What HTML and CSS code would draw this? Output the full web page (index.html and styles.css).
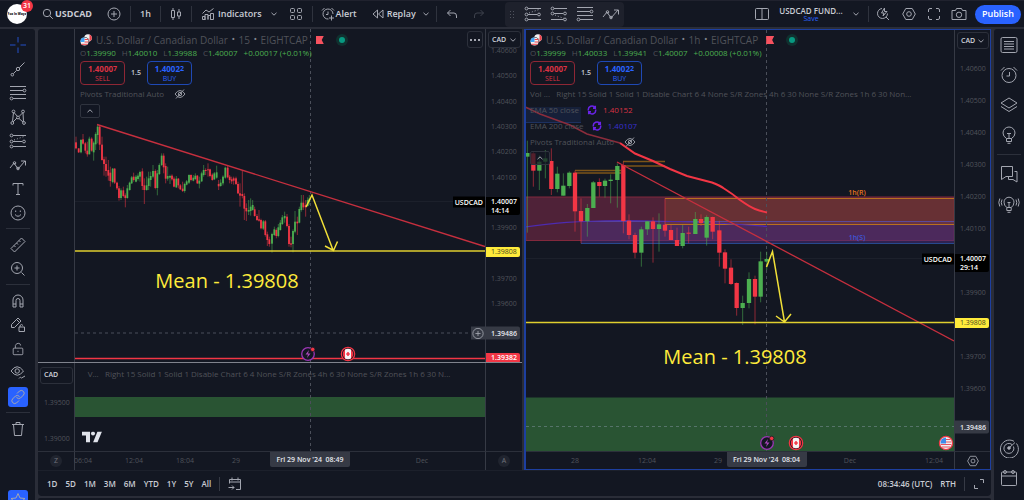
FILE: index.html
```html
<!DOCTYPE html>
<html lang="en">
<head>
<meta charset="utf-8">
<title>USDCAD chart</title>
<link rel="stylesheet" href="styles.css">
</head>
<body>
<svg class="defs" aria-hidden="true">
  <symbol id="i-chev" viewBox="0 0 8 8"><path d="M1.5 2.8 4 5.2 6.5 2.8"/></symbol>
  <symbol id="i-up" viewBox="0 0 8 8"><path d="M1.5 5.2 4 2.8 6.5 5.2"/></symbol>
  <symbol id="i-dots" viewBox="0 0 12 4"><path d="M1 1h2v2H1zM5 1h2v2H5zM9 1h2v2H9z" fill="#a3a6b0" stroke="none"/></symbol>
  <symbol id="i-search" viewBox="0 0 12 12"><circle cx="5" cy="5" r="3.7"/><path d="m7.8 7.8 3 3"/></symbol>
  <symbol id="i-plus" viewBox="0 0 14 14"><circle cx="7" cy="7" r="6"/><path d="M7 4v6M4 7h6"/></symbol>
  <symbol id="i-candles" viewBox="0 0 12 14"><path d="M1.5 3.5h3v7h-3zM3 1v2.500M3 10.500V13M7.500 5h3v4h-3zM9 2v3M9 9v3"/></symbol>
  <symbol id="i-ind" viewBox="0 0 14 14"><path d="M1.500 12.500V9.500h2.500v3M4 12.500v-5h3v5M7 12.500V8.500h2.500v4M9.500 12.500v-6H12.500v6zM1.500 6.500 5 3 8 5 12.500 1.500M1.500 12.500h3"/></symbol>
  <symbol id="i-grid" viewBox="0 0 14 14"><rect x="1.500" y="1.500" width="4" height="4" rx="1"/><rect x="8.500" y="1.500" width="4" height="4" rx="1"/><rect x="1.500" y="8.500" width="4" height="4" rx="1"/><rect x="8.500" y="8.500" width="4" height="4" rx="1"/></symbol>
  <symbol id="i-alert" viewBox="0 0 14 14"><path d="M7.500 12A5 5 0 1 1 12 7M7 4.500v3H5M1 3.500 3.500 1M10.500 1 13 3.500M10.500 8.500v5M8 11h5"/></symbol>
  <symbol id="i-replay" viewBox="0 0 12 12"><path d="M5.500 2 1 6l4.500 4zM11 2 6.500 6 11 10z"/></symbol>
  <symbol id="i-undo" viewBox="0 0 12 12"><path d="M4.500 2 1.500 5l3 3M1.500 5H8q2.500 0 2.500 3v2"/></symbol>
  <symbol id="i-redo" viewBox="0 0 12 12"><path d="m7.500 2 3 3-3 3M10.500 5H4Q1.500 5 1.500 8v2"/></symbol>
  <symbol id="i-par" viewBox="0 0 18 16"><path d="M4 2.500h13M4 8.500h9M4 13.500h13"/><path d="m5 7 10-3.500" stroke-dasharray="1 2"/><circle cx="2.500" cy="2.500" r="1.400"/><circle cx="2.500" cy="8.500" r="1.400"/><circle cx="15" cy="8.500" r="1.400"/><circle cx="2.500" cy="13.500" r="1.400"/></symbol>
  <symbol id="i-par2" viewBox="0 0 18 16"><path d="M4 2.500h13M4 7.500h9M1 13.500h12"/><path d="m5 9 9 3.500" stroke-dasharray="1 2"/><circle cx="2.500" cy="2.500" r="1.400"/><circle cx="2.500" cy="7.500" r="1.400"/><circle cx="15" cy="7.500" r="1.400"/><circle cx="15" cy="13.500" r="1.400"/></symbol>
  <symbol id="i-fib" viewBox="0 0 18 16"><path d="M1 1.500h16M1 5.500h13M1 9.500h16M4 13.500h13"/><circle cx="15.500" cy="5.500" r="1.400"/><circle cx="2.500" cy="13.500" r="1.400"/></symbol>
  <symbol id="i-zig" viewBox="0 0 18 16"><path d="m1 11 4-5 4 6 7-8M12 4h4.500v4.500"/><circle cx="5.500" cy="6" r="1.300"/><circle cx="9" cy="11.500" r="1.300"/></symbol>
  <symbol id="i-layout" viewBox="0 0 14 14"><rect x=".5" y="1.500" width="13" height="11" rx="1"/><path d="M7 1.500v11"/></symbol>
  <symbol id="i-quick" viewBox="0 0 14 14"><path d="M6 1.500a5 5 0 1 0 5.500 5M10 10l3 3M8.500 1 5.500 6H8L7 9l4-4.500H8.500z"/></symbol>
  <symbol id="i-gear" viewBox="0 0 14 14"><path d="M3.800 1.500h6.400L13.300 7l-3.100 5.500H3.800L.7 7z"/><circle cx="7" cy="7" r="2.300"/></symbol>
  <symbol id="i-full" viewBox="0 0 14 14"><path d="M1.500 5V3q0-1.500 1.500-1.500h2M9 1.500h2q1.500 0 1.500 1.500v2M12.500 9v2q0 1.500-1.500 1.500H9M5 12.500H3q-1.500 0-1.500-1.500V9"/></symbol>
  <symbol id="i-cam" viewBox="0 0 16 14"><path d="M1 3.500h3.500L5.500 1.500h5l1 2H15v9H1z"/><circle cx="8" cy="7.800" r="2.700"/></symbol>
  <symbol id="i-cross" viewBox="0 0 16 16"><path d="M8 0v5.500M8 10.500V16M0 8h5.500M10.500 8H16"/></symbol>
  <symbol id="i-line" viewBox="0 0 16 16"><path d="m3.300 12.700 3.300-3.300M9.400 6.600 14.500 1.500"/><circle cx="8" cy="8" r="1.700"/><circle cx="2.300" cy="13.700" r="1.300"/></symbol>
  <symbol id="i-pat" viewBox="0 0 16 16"><path d="m2.500 12.500 1-9M4 3.500l3.500 4M3 13l4-4M9 7.500 12.500 4M13 4l.5 8.500M9 9.500l4 3.500"/><circle cx="3.500" cy="2.500" r="1.400"/><circle cx="13" cy="2.500" r="1.400"/><circle cx="8" cy="8.500" r="1.400"/><circle cx="2.300" cy="14" r="1.400"/><circle cx="14" cy="14" r="1.400"/></symbol>
  <symbol id="i-text" viewBox="0 0 16 16"><path d="M3 4.500V2.500h10v2M8 2.500v11M6 13.500h4"/></symbol>
  <symbol id="i-smile" viewBox="0 0 16 16"><circle cx="8" cy="8" r="7"/><path d="M5 9.500q3 3.500 6 0M5.700 5.500v1.500M10.300 5.500v1.500"/></symbol>
  <symbol id="i-ruler" viewBox="0 0 16 16"><path d="M1 11.500 11.500 1 15 4.500 4.500 15zM4 8.500l1.500 1.500M6.500 6 8 7.500M9 3.500 10.500 5"/></symbol>
  <symbol id="i-zoom" viewBox="0 0 16 16"><circle cx="7" cy="7" r="5.500"/><path d="M7 4.500v5M4.500 7h5M11.500 11.500l3 3"/></symbol>
  <symbol id="i-mag" viewBox="0 0 16 16"><path d="M3 14V7a5 5 0 0 1 10 0v7h-3V7.500a2 2 0 0 0-4 0V14zM3 11h3M10 11h3"/></symbol>
  <symbol id="i-penlock" viewBox="0 0 16 16"><path d="M1.500 10.500v-3L8 1l3 3-6.500 6.500zM6.500 2.500l3 3M9 10h5.500v4.500H9zM10 10V8.500q1.700-2 3 0"/></symbol>
  <symbol id="i-lock" viewBox="0 0 16 16"><rect x="2.500" y="7" width="11" height="7.500" rx="1"/><path d="M5 7V4q1-3 4-2.500 2 .5 2 2.500M8 10v1.500"/></symbol>
  <symbol id="i-eye" viewBox="0 0 16 16"><path d="M1 6q6-8.500 12.500 0-6 8.500-12.500 0z"/><circle cx="7.200" cy="6" r="2.200"/><path d="M9 13.500q1.500-2.500 2.500-.5l3.500-2"/></symbol>
  <symbol id="i-link" viewBox="0 0 16 16"><path d="m7 4.500 2.500-2.500q2.500-1.500 4 .5 1.500 1.500 0 3.500l-3 3q-2 1.500-4-.5M9 11.500 6.500 14q-2.500 1.500-4-.5-1.500-1.500 0-3.500l3-3q2-1.500 4 .5"/></symbol>
  <symbol id="i-trash" viewBox="0 0 16 16"><path d="M2 3.500h12M6 3.500V1.500h4v2M3.500 3.500l1 11h7l1-11"/></symbol>
  <symbol id="i-star" viewBox="0 0 16 16"><path d="m8 1.500 2 4.500 5 .5-3.700 3.300 1 4.700L8 12l-4.300 2.500 1-4.700L1 6.500 6 6z"/></symbol>
  <symbol id="i-list" viewBox="0 0 18 18"><rect x="1" y="1.500" width="16" height="15" rx="1.500"/><path d="M4 5.500h10M4 8h10M4 10.500h10M4 13h10"/></symbol>
  <symbol id="i-clock" viewBox="0 0 18 18"><circle cx="9" cy="9.500" r="7"/><path d="M9.500 6v4h-3M1 4.500 4.500 1M13.500 1 17 4.500"/></symbol>
  <symbol id="i-layers" viewBox="0 0 18 18"><path d="m9 2 8 5-8 5-8-5zM1 10.500l8 5 8-5"/></symbol>
  <symbol id="i-bulb" viewBox="0 0 18 18"><path d="M6.500 12.500Q3 10.500 3 7a6 6 0 0 1 12 0q0 3.500-3.500 5.500zM6.500 12.500v3h5v-3M7.500 17.300h3M7 7.500h4M9 7.500v5"/></symbol>
  <symbol id="i-chat" viewBox="0 0 18 18"><path d="M1.500 1.500h11v10H6L1.500 14.500zM14.500 6.500h2.500v10.500L13 14.500H8.500v-3"/></symbol>
  <symbol id="i-wave" viewBox="0 0 22 18"><path d="M8.800 12.500Q6 10.500 6 7.200a5 5 0 0 1 10 0q0 3.300-2.800 5.300zM8.800 12.500v3h4.400v-3M9.500 17.300h3M9.500 7.500h3M11 7.500v5M4 4.500q-1.500 3 0 6M1.800 3.500q-2 4 0 8M18 4.500q1.500 3 0 6M20.200 3.500q2 4 0 8"/></symbol>
  <symbol id="i-target" viewBox="0 0 20 20"><path d="M15 3.300A9 9 0 1 0 17.500 5.500M13 6.500a5 5 0 1 0 1.500 2M10 10l6-5.500"/><circle cx="10" cy="10" r="1.300" fill="#b2b5be"/></symbol>
  <symbol id="i-cal" viewBox="0 0 18 18"><rect x="1.500" y="3" width="15" height="13.500" rx="1"/><path d="M1.500 7h15"/><circle cx="5" cy="3" r="1.500"/><circle cx="13" cy="3" r="1.500"/></symbol>
  <symbol id="i-goto" viewBox="0 0 14 14"><path d="M1.500 6.500v-4h11v10H8M1.500 5h11M4 .5v3M10 .5v3M.5 10.500H6M4 8.500l2 2-2 2"/></symbol>
  <symbol id="i-exp" viewBox="0 0 12 12"><path d="M7 1.500h3.500V5M1.500 7v3.500H5"/></symbol>
  <symbol id="i-hide" viewBox="0 0 12 10"><path d="M1 5q5-7 10 0-5 7-10 0zM2 9.500 10 .5"/><circle cx="6" cy="5" r="1.700"/></symbol>
  <symbol id="i-loop" viewBox="0 0 10 10"><path d="M1.500 5.500A3.500 3.500 0 0 1 8 3M8.500 4.500A3.500 3.500 0 0 1 2 7M8.300.8V3.200H6M1.700 9.200V6.800H4"/></symbol>
  <symbol id="i-pair" viewBox="0 0 12 12"><circle cx="8" cy="4" r="3.800" fill="#f0f0f0"/><path d="M9.500.5a3.800 3.800 0 0 1 0 7z" fill="#ef3f49"/><circle cx="4.500" cy="7.500" r="4.500" fill="#131722"/><circle cx="4.500" cy="7.500" r="4" fill="#f0f0f0"/><path d="M4.500 5.500h3.500M4.500 8h4M1.500 10.300h6" stroke="#ef3f49"/><path d="M.5 7.500a4 4 0 0 1 4-4v4.500H.6z" fill="#42a5f5"/></symbol>
  <symbol id="i-bolt" viewBox="0 0 16 16"><circle cx="8" cy="8" r="6.300" fill="#131722" stroke="#9c36b5" stroke-width="1.300"/><path d="M9 4 5.500 8.500H8L7 12l3.500-4.500H8z" fill="#ab47bc"/><circle cx="12.700" cy="3.400" r="2.200" fill="#f23645" stroke="#131722" stroke-width=".7"/></symbol>
  <symbol id="i-ca" viewBox="0 0 16 16"><circle cx="8" cy="8" r="6.700" fill="#131722" stroke="#f23645" stroke-width="1.200"/><circle cx="8" cy="8" r="5.300" fill="#f23645"/><path d="M5 3.600q3-1.600 6 0v8.800q-3 1.600-6 0z" fill="#f5f5f5"/><path d="M8 6v4M6.200 8h3.600" stroke="#f23645" stroke-width="1.500"/></symbol>
  <symbol id="i-us" viewBox="0 0 16 16"><circle cx="8" cy="8" r="6.600" fill="#f0f0f0" stroke="#f23645" stroke-width="1.200"/><path d="M8 4.500h4.500M8 7h5.400M2.700 9.500h10.600M4 12h8" stroke="#e65361" stroke-width="1.200"/><path d="M2.500 8.500A5.500 5.500 0 0 1 8 2.500v6z" fill="#3d8bea"/></symbol>
</svg>

<div class="app">
  <header class="top">
    <button class="avatar" aria-label="Account"><span class="face">Fox In Wayz</span><span class="badge">31</span></button>
    <button class="symbol"><svg class="ic s12"><use href="#i-search"/></svg>USDCAD</button>
    <button class="tool w32" aria-label="Compare"><svg class="ic s14"><use href="#i-plus"/></svg></button>
    <button class="tool w30 cut">1h</button>
    <button class="tool w31 cut" aria-label="Chart type"><svg class="ic s14"><use href="#i-candles"/></svg></button>
    <button class="tool lead cut"><svg class="ic s14"><use href="#i-ind"/></svg>Indicators</button>
    <button class="tool w24" aria-label="Indicator menu"><svg class="ic s8"><use href="#i-chev"/></svg></button>
    <button class="tool w20" aria-label="Templates"><svg class="ic s14"><use href="#i-grid"/></svg></button>
    <button class="tool lead alert cut"><svg class="ic s14"><use href="#i-alert"/></svg>Alert</button>
    <button class="tool lead replay"><svg class="ic s12"><use href="#i-replay"/></svg>Replay</button>
    <button class="tool w20" aria-label="Replay menu"><svg class="ic s8"><use href="#i-chev"/></svg></button>
    <button class="tool w31 cut" aria-label="Undo"><svg class="ic s12"><use href="#i-undo"/></svg></button>
    <button class="tool w24 off" aria-label="Redo"><svg class="ic s12"><use href="#i-redo"/></svg></button>
    <div class="floating">
      <span class="grip"></span>
      <button class="tool" aria-label="Parallel"><svg class="ic s18"><use href="#i-par"/></svg></button>
      <button class="tool" aria-label="Channel"><svg class="ic s18"><use href="#i-par2"/></svg></button>
      <button class="tool" aria-label="Fibonacci"><svg class="ic s18"><use href="#i-fib"/></svg></button>
      <button class="tool" aria-label="Path"><svg class="ic s18"><use href="#i-zig"/></svg></button>
    </div>
    <div class="right">
      <button class="tool w32" aria-label="Layout"><svg class="ic s14"><use href="#i-layout"/></svg></button>
      <button class="layout"><span>USDCAD FUND...</span><small>Save</small></button>
      <button class="tool w24" aria-label="Layout menu"><svg class="ic s8"><use href="#i-chev"/></svg></button>
      <button class="tool w28 cut" aria-label="Quick search"><svg class="ic s14"><use href="#i-quick"/></svg></button>
      <button class="tool w25" aria-label="Settings"><svg class="ic s14"><use href="#i-gear"/></svg></button>
      <button class="tool w25" aria-label="Fullscreen"><svg class="ic s14"><use href="#i-full"/></svg></button>
      <button class="tool w25" aria-label="Snapshot"><svg class="ic s16"><use href="#i-cam"/></svg></button>
      <button class="publish">Publish</button>
    </div>
  </header>

  <div class="main">
    <nav class="tools">
      <button class="blue" aria-label="Cross"><svg class="ic s16"><use href="#i-cross"/></svg></button>
      <button aria-label="Trend line"><svg class="ic s16"><use href="#i-line"/></svg></button>
      <button aria-label="Fib"><svg class="ic s18"><use href="#i-fib"/></svg></button>
      <button aria-label="Pattern"><svg class="ic s16"><use href="#i-pat"/></svg></button>
      <button aria-label="Position"><svg class="ic s18"><use href="#i-par"/></svg></button>
      <button aria-label="Path"><svg class="ic s18"><use href="#i-zig"/></svg></button>
      <button aria-label="Text"><svg class="ic s16"><use href="#i-text"/></svg></button>
      <button aria-label="Emoji"><svg class="ic s16"><use href="#i-smile"/></svg></button>
      <hr>
      <button aria-label="Measure"><svg class="ic s16"><use href="#i-ruler"/></svg></button>
      <button aria-label="Zoom"><svg class="ic s16"><use href="#i-zoom"/></svg></button>
      <hr>
      <button aria-label="Magnet"><svg class="ic s16"><use href="#i-mag"/></svg></button>
      <button aria-label="Keep drawing"><svg class="ic s16"><use href="#i-penlock"/></svg></button>
      <button aria-label="Lock"><svg class="ic s14"><use href="#i-lock"/></svg></button>
      <button aria-label="Hide"><svg class="ic s16"><use href="#i-eye"/></svg></button>
      <button aria-label="Sync"><span class="fill"><svg class="ic s16"><use href="#i-link"/></svg></span></button>
      <hr>
      <button aria-label="Remove"><svg class="ic s16"><use href="#i-trash"/></svg></button>
      <button class="fav" aria-label="Favourites"><span class="fill"><svg class="ic s16"><use href="#i-star"/></svg></span></button>
    </nav>

    <div class="center">
      <div class="charts">
        <section class="chart one">
          <div class="axis left" id="axisC"><button class="cur low">CAD</button></div>
          <div class="plot" id="plotA" data-box="75 29 410 422">
            <svg class="canvas" viewBox="75 29 410 422" preserveAspectRatio="none">
              <path d="M75 201.500h410" stroke="#1c202b"/>
              <rect x="75" y="397" width="410" height="20" fill="#295433"/>
              <path d="M310.500 29v422" stroke="#4b4f5a" stroke-dasharray="3 3"/>
              <path d="M75 333h410" stroke="#4b4f5a" stroke-dasharray="3 3"/>
              <g id="candlesA"></g>
              <path d="M97 124.500 485 246.500" stroke="#c62f3e" stroke-width="1.400"/>
              <path d="M75 251h410" stroke="#e0cf2f" stroke-width="1.600"/>
              <path d="M75 358.500h410" stroke="#f23645" stroke-width="1.400"/>
              <path d="m306 207 6-12 21 55M325 246l8.500 4.500 4-9" stroke="#f0df38" stroke-width="1.500" fill="none"/>
            </svg>
            <div class="legend">
              <div class="title"><svg class="ic pair"><use href="#i-pair"/></svg><span>U.S. Dollar / Canadian Dollar</span><b>•</b><span>15</span><b>•</b><span>EIGHTCAP</span><i class="flag"></i><i class="live"></i></div>
              <div class="ohlc"><span>O<em>1.39990</em></span><span>H<em>1.40010</em></span><span>L<em>1.39988</em></span><span>C<em>1.40007</em></span><em>+0.00017 (+0.01%)</em></div>
              <div class="deal"><button class="sell"><b>1.4000<sup>7</sup></b>SELL</button><span>1.5</span><button class="buy"><b>1.4002<sup>2</sup></b>BUY</button></div>
              <div class="study">Pivots Traditional Auto <svg class="ic eye"><use href="#i-hide"/></svg></div>
              <button class="fold" aria-label="Collapse"><svg class="ic s8"><use href="#i-up"/></svg></button>
            </div>
            <button class="more" aria-label="More"><svg class="ic dots"><use href="#i-dots"/></svg></button>
            <span class="mean" data-x="227" data-y="281">Mean - 1.39808</span>
            <span class="tag black" data-end="485" data-y="201.500">USDCAD</span>
            <span class="tag grey" data-end="485" data-y="333"><svg class="ic s12"><use href="#i-plus"/></svg></span>
            <svg class="mark" data-x="308" data-y="354"><use href="#i-bolt"/></svg>
            <svg class="mark" data-x="348" data-y="354"><use href="#i-ca"/></svg>
            <span class="study second" data-x="269" data-y="374">V...&nbsp;&nbsp; Right 15 Solid 1 Solid 1 Disable Chart 6 4 None S/R Zones 4h 6 30 None S/R Zones 1h 6 30 N...</span>
            <svg class="logo" viewBox="0 0 20 11" data-x="92.500" data-y="437"><path d="M0 0h8v11H4V4H0zM15.500 0H20l-4.600 11H11z" fill="#e0e3eb"/><circle cx="11" cy="2" r="2" fill="#e0e3eb"/></svg>
          </div>
          <div class="axis" id="axisA"><button class="cur">CAD<svg class="ic s8"><use href="#i-chev"/></svg></button></div>
          <div class="corner left"><span class="dot">Z</span></div>
          <div class="times" id="timeA"></div>
          <div class="corner"><span class="dot">A</span></div>
          <div class="split"></div>
        </section>

        <section class="chart two">
          <div class="plot" id="plotB" data-box="526 30 428 421">
            <svg class="canvas" viewBox="526 30 428 421" preserveAspectRatio="none">
              <rect x="526" y="107" width="55" height="15" fill="#162039"/>
              <path d="M526 122.500h55" stroke="#1d3160"/>
              <path d="M526 258.500h428" stroke="#1c202b"/>
              <rect x="526" y="397.500" width="428" height="54" fill="#295433"/>
              <rect x="526" y="197" width="428" height="43.500" fill="#4f2238" stroke="#82283c"/>
              <rect x="581" y="221.500" width="373" height="22" fill="#4a2f80" fill-opacity=".5"/>
              <rect x="665" y="198.500" width="289" height="26" fill="#7c3d32" fill-opacity=".55"/>
              <path d="M581 221.500h373" stroke="#5a4a9c"/>
              <path d="M581 243.500h373" stroke="#27498e"/>
              <path d="M665 198.500h289M665 224.500h289" stroke="#b8701f"/>
              <path d="M575 170.500h46M575 173h46M623 161.500h42M623 166h42" stroke="#7c5419" stroke-width="1.300"/>
              <path d="M766.500 30v421" stroke="#4b4f5a" stroke-dasharray="3 3"/>
              <path d="M526 426.500h428" stroke="#56746a" stroke-dasharray="3 3"/>
              <path d="M525 227c30-4 50-6 95-6.500 40 .5 100 1.500 147 6" stroke="#4d2bb0" stroke-width="1.200" fill="none"/>
              <g id="candlesB"></g>
              <path d="M525 107 540 114 570 125 587 134 620 143" stroke="#8b2c3b" stroke-width="1.600" fill="none"/>
              <path d="m620 143 15 10.500 18 7.500 17 8 17 7 25 6.500q8 3 12 6 8 5 16 11.500 10 7 15 9 5 2 12 3.500" stroke="#f23645" stroke-width="2" fill="none"/>
              <path d="M617 162 954 341" stroke="#c62f3e" stroke-width="1.300"/>
              <path d="M526 322.500h428" stroke="#e0cf2f" stroke-width="1.500"/>
              <path d="m766.500 267 6-15.500 12 70.500M776 316l8.500 6 6.500-8" stroke="#f0df38" stroke-width="1.500" fill="none"/>
            </svg>
            <div class="legend">
              <div class="title"><svg class="ic pair"><use href="#i-pair"/></svg><span>U.S. Dollar / Canadian Dollar</span><b>•</b><span>1h</span><b>•</b><span>EIGHTCAP</span><i class="flag"></i><i class="live"></i></div>
              <div class="ohlc"><span>O<em>1.39999</em></span><span>H<em>1.40033</em></span><span>L<em>1.39941</em></span><span>C<em>1.40007</em></span><em>+0.00008 (+0.01%)</em></div>
              <div class="deal"><button class="sell"><b>1.4000<sup>7</sup></b>SELL</button><span>1.5</span><button class="buy"><b>1.4002<sup>2</sup></b>BUY</button></div>
              <div class="study">Vol ...&nbsp;&nbsp; Right 15 Solid 1 Solid 1 Disable Chart 6 4 None S/R Zones 4h 6 30 None S/R Zones 1h 6 30 Non...</div>
              <div class="study">EMA 50 close <svg class="ic loop"><use href="#i-loop"/></svg><span class="red">1.40152</span></div>
              <div class="study">EMA 200 close <svg class="ic loop"><use href="#i-loop"/></svg><span class="indigo">1.40107</span></div>
              <div class="study">Pivots Traditional Auto <svg class="ic eye"><use href="#i-hide"/></svg></div>
              <button class="fold" aria-label="Collapse"><svg class="ic s8"><use href="#i-up"/></svg></button>
            </div>
            <span class="zone res" data-x="857" data-y="193">1h(R)</span>
            <span class="zone sup" data-x="857" data-y="238">1h(S)</span>
            <span class="mean" data-x="735" data-y="357">Mean - 1.39808</span>
            <span class="tag black" data-end="954" data-y="259">USDCAD</span>
            <svg class="mark" data-x="767" data-y="442.500"><use href="#i-bolt"/></svg>
            <svg class="mark" data-x="796" data-y="442.500"><use href="#i-ca"/></svg>
            <svg class="mark" data-x="946" data-y="442.500"><use href="#i-us"/></svg>
          </div>
          <div class="axis" id="axisB"><button class="cur">CAD<svg class="ic s8"><use href="#i-chev"/></svg></button></div>
          <div class="times" id="timeB"></div>
          <div class="corner"><svg class="ic s12"><use href="#i-gear"/></svg></div>
        </section>
      </div>

      <footer class="foot">
        <button>1D</button><button>5D</button><button>1M</button><button>3M</button><button>6M</button><button>YTD</button><button>1Y</button><button>5Y</button><button>All</button>
        <span class="bar"></span>
        <button aria-label="Go to"><svg class="ic s14"><use href="#i-goto"/></svg></button>
        <span class="clock">08:34:46 (UTC)</span><button>RTH</button>
        <span class="bar"></span>
        <button aria-label="Expand"><svg class="ic s12"><use href="#i-exp"/></svg></button>
      </footer>
      <div class="strip"></div>
    </div>

    <aside class="side">
      <button aria-label="Watchlist"><svg class="ic s18"><use href="#i-list"/></svg></button>
      <button aria-label="Alerts"><svg class="ic s18"><use href="#i-clock"/></svg></button>
      <button aria-label="Objects"><svg class="ic s18"><use href="#i-layers"/></svg></button>
      <button aria-label="Ideas"><svg class="ic s18"><use href="#i-bulb"/></svg></button>
      <hr>
      <button aria-label="Chats"><svg class="ic s18"><use href="#i-chat"/></svg></button>
      <button aria-label="Streams"><svg class="ic s22"><use href="#i-wave"/></svg></button>
      <button class="push" aria-label="Screener"><svg class="ic s20"><use href="#i-target"/></svg></button>
      <button aria-label="Calendar"><svg class="ic s18"><use href="#i-cal"/></svg></button>
    </aside>
  </div>
</div>
<script src="chart.js"></script>
</body>
</html>
```
FILE: styles.css
```css
* { box-sizing: border-box; }
body { margin: 0; background: #2a2d38; color: #c9ccd4; font: 9px/12px "Open Sans", "Noto Sans", sans-serif; }
button { margin: 0; padding: 0; border: 0; background: none; color: inherit; font: inherit; cursor: pointer; }
hr { width: 24px; height: 1px; margin: 4px 0; border: 0; background: #2c303b; flex: none; }
.defs { position: absolute; width: 0; height: 0; }
.ic { fill: none; stroke: #a3a6b0; stroke-width: 1; flex: none; display: block; }
.s8 { width: 8px; height: 8px; }
.s12 { width: 12px; height: 12px; }
.s14 { width: 14px; height: 14px; }
.s16 { width: 16px; height: 16px; }
.s18 { width: 18px; height: 16px; }
.s20 { width: 20px; height: 20px; }
.s22 { width: 22px; height: 18px; }

.app { height: 100vh; display: flex; flex-direction: column; gap: 2px; overflow: hidden; }
.top { height: 27px; flex: none; display: flex; align-items: center; background: #131722; border-top: 1px solid #20222e; font-weight: 600; font-size: 9px; }
.avatar { position: relative; width: 38px; padding-left: 7px; }
.face { display: flex; align-items: center; justify-content: center; width: 20px; height: 20px; border-radius: 50%; background: #fff; color: #111; font-size: 3px; font-weight: 800; line-height: 4px; white-space: nowrap; overflow: hidden; }
.badge { position: absolute; left: 21px; top: -4px; width: 12px; height: 12px; border-radius: 50%; background: #f23645; color: #fff; font-size: 7px; line-height: 12px; }
.symbol { width: 60px; padding-left: 4px; display: flex; align-items: center; gap: 1px; font-weight: 700; }
.tool { height: 16px; display: flex; align-items: center; justify-content: center; }
.cut { border-left: 1px solid #2f333e; }
.w20 { width: 20px; }
.w24 { width: 24px; }
.w25 { width: 25px; }
.w28 { width: 28px; }
.w30 { width: 30px; }
.w31 { width: 31px; }
.w32 { width: 32px; }
.lead { padding-left: 9px; gap: 3px; }
.alert { margin-left: 6px; padding-left: 8px; gap: 1px; }
.replay { padding-left: 15px; gap: 3px; }
.off { opacity: .3; }
.floating { display: flex; align-items: center; gap: 8px; height: 25px; margin-left: 14px; padding: 0 4px; border-radius: 4px; background: #1e212c; }
.grip { width: 7px; height: 9px; background: radial-gradient(circle, #50535e 1px, transparent 1px) 0 0 / 3px 3px; }
.right { margin-left: auto; display: flex; align-items: center; padding-right: 3px; }
.layout { width: 66px; display: flex; flex-direction: column; align-items: center; font-size: 8px; line-height: 9px; white-space: nowrap; }
.layout small { color: #2962ff; font-size: 7px; line-height: 8px; font-weight: 400; }
.publish { width: 46px; height: 19px; margin-left: 4px; border-radius: 10px; background: #2962ff; color: #fff; font-weight: 600; }

.main { flex: 1; min-height: 0; display: flex; gap: 3px; }
.tools, .side { display: flex; flex-direction: column; align-items: center; background: #131722; overflow: hidden; }
.tools { width: 35px; padding-top: 4px; border-top-right-radius: 3px; }
.tools button { height: 24px; width: 24px; flex: none; display: flex; align-items: center; justify-content: center; }
.tools hr { margin: 3px 0 4px; }
.blue .ic { stroke: #2450c8; }
.fill { width: 20px; height: 20px; border-radius: 3px; background: #2962ff; display: flex; align-items: center; justify-content: center; }
.tools .fav { margin-top: 47px; }
.side { width: 30px; padding-top: 1px; border-top-left-radius: 3px; }
.side button { height: 30px; flex: none; display: flex; align-items: center; }
.side .ic.s18 { height: 18px; }
.side .push { margin-top: auto; }
.side button:last-child { margin-bottom: 7px; }

.center { flex: 1; min-width: 0; display: flex; flex-direction: column; }
.charts { flex: 1; min-height: 0; display: grid; grid-template-columns: 484fr 467fr; gap: 2px; }
.chart { position: relative; display: grid; min-width: 0; background: #131722; }
.one { grid-template: minmax(0, 1fr) 19px / 37px minmax(0, 1fr) 37px; border-top-left-radius: 3px; }
.two { grid-template: minmax(0, 1fr) 18px / minmax(0, 1fr) 36px; border: 1px solid #1d3fa0; border-left-width: 2px; }
.plot { position: relative; overflow: hidden; }
.canvas { position: absolute; inset: 0; width: 100%; height: 100%; }
.axis { position: relative; border-left: 1px solid #363a45; overflow: hidden; }
.axis.left { border-left: 0; border-right: 1px solid #363a45; }
.times, .corner { position: relative; border-top: 1px solid #2c303b; }
.corner { border-left: 1px solid #363a45; display: flex; align-items: center; justify-content: center; }
.corner.left { border-left: 0; border-right: 1px solid #363a45; }
.split { position: absolute; left: 0; right: 0; top: 75.500%; height: 1px; background: #80838d; }
.dot { width: 12px; height: 12px; border-radius: 50%; background: #20242f; color: #70737d; font-size: 7px; text-align: center; }
.cur { position: absolute; z-index: 2; top: 2px; left: 2px; right: 1px; height: 17px; padding: 0 3px; display: flex; align-items: center; justify-content: space-between; border: 1px solid #2c303b; border-radius: 3px; background: #131722; color: #d1d4dc; font-size: 7px; font-weight: 600; }
.cur.low { top: 80%; }
.price, .when { position: absolute; color: #50535b; font-size: 7px; line-height: 10px; white-space: nowrap; }
.price { left: 5px; transform: translateY(-50%); }
.left .price { left: 6px; }
.when { top: 4px; transform: translateX(-50%); }
.price.chip { left: 0; width: 34px; padding: 0 0 0 5px; border-radius: 0 2px 2px 0; }
.chip { font-weight: 600; }
.chip.yellow { background: #ffeb3b; color: #4a4720; font-weight: 400; }
.chip.redc { background: #f23645; color: #fff; }
.chip.grey { background: #363a45; color: #e5e7ed; line-height: 13px; }
.chip.black { background: #000; color: #fff; transform: translateY(-5px); line-height: 9px; }
.when.chip { top: 0; height: 15px; width: 80px; text-align: center; background: #363a45; color: #e5e7ed; line-height: 15px; border-radius: 0 0 2px 2px; white-space: pre; }

.legend { position: absolute; left: 5px; top: 3px; display: flex; flex-direction: column; align-items: flex-start; color: #505259; white-space: nowrap; }
.two .legend { left: 4px; top: 2px; }
.title { height: 16px; display: flex; align-items: center; gap: 4px; font-size: 10px; }
.title b { color: #81848d; font-size: 7px; }
.pair { width: 12px; height: 12px; stroke: none; }
.flag { width: 8px; height: 8px; margin-left: 4px; background: #f7525f; clip-path: polygon(0 0, 100% 0, 75% 50%, 100% 100%, 0 100%); }
.live { width: 6px; height: 6px; margin-left: 11px; border-radius: 50%; background: #089981; box-shadow: 0 0 0 3px #10302f; }
.ohlc { height: 10px; display: flex; align-items: center; gap: 6px; font-size: 8px; }
.ohlc em { font-style: normal; color: #4caf50; }
.deal { display: flex; align-items: center; gap: 6px; margin-top: 3px; font-size: 7px; color: #c9ccd4; font-weight: 600; }
.deal button { width: 45px; height: 24px; display: flex; flex-direction: column; align-items: center; justify-content: center; border: 1px solid; border-radius: 4px; font-size: 7px; font-weight: 400; line-height: 9px; }
.deal b { font-size: 8px; line-height: 10px; }
.deal sup { font-size: 7px; line-height: 0; vertical-align: 1px; }
.deal .sell { color: #d93243; border-color: #8f2735; }
.deal .buy { color: #2962ff; border-color: #1f49b5; }
.study { height: 16px; display: flex; align-items: center; gap: 5px; font-size: 8px; color: #505259; white-space: pre; }
.deal + .study { margin-top: 1px; }
.eye { width: 12px; height: 10px; margin-left: 3px; stroke: #9598a1; }
.loop { width: 10px; height: 10px; stroke: #6a24e8; stroke-width: 1.5; margin: 0 1px; }
.red { color: #d93243; }
.indigo { color: #3a30d0; }
.fold { width: 20px; height: 14px; margin-top: 2px; display: flex; align-items: center; justify-content: center; border: 1px solid #2f333e; border-radius: 2px; background: rgba(19, 23, 34, .7); }
.two .fold { margin-top: 1px; }
.more { position: absolute; right: 2px; top: 2px; width: 16px; height: 17px; border: 1px solid #2c303b; border-radius: 3px; display: flex; align-items: center; justify-content: center; }
.dots { width: 12px; height: 4px; }
.mean { color: #ffeb3b; font-size: 20px; font-weight: 500; line-height: 28px; }
.zone { font-size: 7px; line-height: 8px; font-weight: 600; }
.res { color: #e8731d; }
.sup { color: #3f56d8; }
.tag { height: 11px; padding: 0 2px; font-size: 7px; line-height: 11px; font-weight: 600; }
.tag.black { background: #000; color: #fff; }
.tag.grey { height: 13px; padding: 1px; background: #363a45; }
.mark { width: 16px; height: 16px; }
.logo { width: 20px; height: 11px; }

.foot { height: 26px; flex: none; display: flex; align-items: center; gap: 8px; padding: 0 6px 0 9px; background: #131722; border-top: 1px solid #1c202b; border-radius: 0 0 4px 4px; font-size: 8px; font-weight: 600; }
.bar { width: 1px; height: 14px; background: #363a45; }
.clock { margin-left: auto; }
.strip { height: 2px; margin-top: 2px; background: #131722; border-radius: 3px 3px 0 0; }
```
FILE: chart.js
```js
// Each candle: x, body top, body bottom, high, low. Negative x marks a falling bar. Units are thirds of a pixel.
const m15 = `-228 97 115 80 118,-236 115 127 115 129,243 90 127 87 130,-249 88 101 72 104,-256 100 122 96 130,-262 122 133 95 140,268 86 133 80 133,-275 86 122 82 125,281 98 127 94 152,287 72 103 67 120,293 50 75 45 100,-299 50 104 45 120,-306 104 150 80 152,-312 148 162 140 197,-318 162 183 140 200,-325 180 197 150 212,-331 188 213 170 230,338 176 216 174 220,-344 176 218 174 222,-351 218 235 215 240,-357 235 264 228 272,363 241 264 235 270,-370 241 258 230 262,-376 256 264 250 292,382 235 264 225 266,389 218 240 215 242,395 202 220 198 222,-401 200 210 188 215,408 200 215 195 217,414 197 207 190 212,420 186 200 182 215,-427 184 228 175 240,-433 226 240 205 282,440 226 240 200 242,446 205 228 185 240,452 198 210 185 230,459 183 200 165 205,-466 183 234 178 238,472 190 234 180 256,478 165 192 160 195,485 137 165 130 168,-491 137 172 130 190,-497 168 206 160 220,503 198 206 170 212,510 198 203 194 222,-516 197 208 193 212,-522 206 230 200 232,529 206 232 198 234,-535 206 226 204 235,-541 226 238 222 240,-548 236 243 215 246,554 222 243 218 248,560 214 224 210 226,567 195 218 193 222,-573 195 210 193 214,580 203 212 195 214,586 197 207 190 210,-592 197 220 195 222,598 212 221 200 235,605 190 214 185 216,611 180 195 165 200,-617 180 183 175 195,-624 178 181 160 200,-630 178 198 176 202,-637 194 210 190 212,643 190 208 186 210,650 187 203 167 206,-656 222 229 210 240,662 218 228 208 230,669 200 220 196 226,676 173 203 170 206,-683 173 202 168 205,-689 200 210 195 220,-695 208 214 200 222,-701 205 212 200 224,-708 205 222 200 225,-714 222 250 215 252,-720 250 257 220 290,-727 252 258 180 265,-733 258 296 250 330,-739 294 304 280 333,746 300 305 270 315,752 290 303 265 317,758 285 300 270 302,-764 298 318 290 320,-771 318 330 312 333,-777 328 332 300 335,-783 330 355 326 358,790 334 356 330 360,-796 334 375 330 380,-802 373 390 365 408,-808 388 402 380 410,816 372 401 368 428,823 358 375 350 378,-829 360 378 355 385,835 352 378 342 382,841 338 360 330 362,847 322 342 315 345,854 318 325 305 338,-861 320 348 312 352,-867 348 402 342 410,-873 400 404 380 412,879 363 402 358 427,885 335 365 303 370,-892 335 340 320 375,898 297 338 290 340,904 278 300 255 305,-910 278 292 255 300,-917 285 292 270 320,923 270 288 262 290,928 266 275 255 285`;
const h1 = `22 159 170 122 398,-40 160 212 155 260,58 185 212 165 270,76 175 185 150 235,-94 183 267 145 285,112 221 267 200 277,130 257 287 220 287,148 218 258 214 265,-165 218 334 212 395,-183 333 364 295 430,202 324 364 312 410,220 247 324 243 324,-238 246 258 235 290,255 242 258 236 293,272 239 243 223 310,292 198 240 190 323,-310 195 363 185 400,-327 362 405 343 418,-345 405 458 398 475,364 388 458 380 500,382 364 388 364 405,-399 364 387 352 488,417 373 387 340 455,-435 374 392 295 410,-453 390 420 375 420,-471 420 438 383 438,488 399 438 375 445,-506 398 401 380 430,526 357 402 336 402,-543 357 369 343 378,560 351 413 346 437,-578 351 395 350 418,-598 391 458 362 500,-615 457 506 448 550,-633 503 552 478 555,-650 549 624 547 647,668 609 624 587 675,687 537 609 517 625,-705 537 590 527 673,722 484 590 455 607,740 477 485 455 510`;

function drawCandles(id, rows, ox, oy, width) {
  document.getElementById(id).innerHTML = rows.split(",").map(row => {
    const [sx, top, bottom, high, low] = row.split(" ").map(Number);
    const x = ox + Math.abs(sx) / 3;
    const y = v => oy + v / 3;
    const color = sx < 0 ? "#f23645" : "#4caf50";
    return `<path d="M${x} ${y(high)}V${y(low)}" stroke="${color}" stroke-opacity=".55"/>` +
      `<rect x="${x - width / 2}" y="${y(top)}" width="${width}" height="${(bottom - top) / 3}" fill="${color}"/>`;
  }).join("");
}
drawCandles("candlesA", m15, 0, 110, 1.8);
drawCandles("candlesB", h1, 520, 100, 4.3);

// Overlays sit at chart coordinates given by data-x or data-end and data-y.
for (const plot of document.querySelectorAll(".plot")) {
  const [bx, by, bw, bh] = plot.dataset.box.split(" ").map(Number);
  for (const el of plot.querySelectorAll("[data-y]")) {
    el.style.position = "absolute";
    el.style.whiteSpace = "nowrap";
    el.style.top = (el.dataset.y - by) / bh * 100 + "%";
    if (el.dataset.end) {
      el.style.right = (bx + bw - el.dataset.end) / bw * 100 + "%";
      el.style.transform = "translateY(-50%)";
    } else {
      el.style.left = (el.dataset.x - bx) / bw * 100 + "%";
      el.style.transform = "translate(-50%, -50%)";
    }
  }
}

function addPrices(id, list, by, bh) {
  const axis = document.getElementById(id);
  for (const [text, y, kind] of list) {
    const el = document.createElement("span");
    el.className = "price" + (kind ? " chip " + kind : "");
    el.innerHTML = text;
    el.style.top = (y - by) / bh * 100 + "%";
    axis.append(el);
  }
}
const ladder = (from, to, y, step, skip) => {
  const out = [];
  for (let p = from; p >= to; p -= 100, y += step) {
    if (!skip.includes(p)) out.push(["1." + p, y]);
  }
  return out;
};
addPrices("axisA", [...ladder(40600, 39600, 51, 25.3, [40000, 39800]),
  ["1.40007<br>14:14", 202, "black"], ["1.39808", 251.5, "yellow"],
  ["1.39486", 333, "grey"], ["1.39382", 358, "redc"]], 29, 422);
addPrices("axisB", [...ladder(40600, 39600, 69, 32, [40000, 39800]),
  ["1.40007<br>29:14", 259, "black"], ["1.39808", 323, "yellow"], ["1.39486", 426.5, "grey"]], 30, 421);
addPrices("axisC", [["1.39500", 403], ["1.39000", 439]], 29, 422);

function addTimes(id, list, bx, bw) {
  const axis = document.getElementById(id);
  for (const [text, x, chip] of list) {
    const el = document.createElement("span");
    el.className = "when" + (chip ? " chip" : "");
    el.textContent = text;
    el.style.left = (x - bx) / bw * 100 + "%";
    axis.append(el);
  }
}
addTimes("timeA", [["06:04", 83], ["12:04", 134], ["18:04", 185], ["29", 236], ["Dec", 422], ["Fri 29 Nov '24  08:49", 310, true]], 75, 410);
addTimes("timeB", [["28", 575], ["12:04", 647], ["29", 718], ["Dec", 850], ["12:04", 934], ["Fri 29 Nov '24  08:04", 766.5, true]], 526, 428);
```
